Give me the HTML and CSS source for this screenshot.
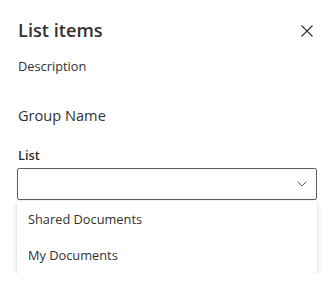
FILE: index.html
```html
<!DOCTYPE html>
<html lang="en">
<head>
    <meta charset="UTF-8">
    <title>List items</title>
    <link rel="stylesheet" href="styles.css">
</head>
<body>
    <div class="panel">
        <div class="panel-header">
            <h1 class="panel-title">List items</h1>
            <button class="close-btn" aria-label="Close">
                <svg width="12" height="12" viewBox="0 0 12 12">
                    <path d="M0.5 0.5 L11.5 11.5 M11.5 0.5 L0.5 11.5" stroke="#323130" stroke-width="1.1" fill="none"/>
                </svg>
            </button>
        </div>
        <p class="description">Description</p>
        <h2 class="group-name">Group Name</h2>
        <label class="field-label">List</label>
        <div class="dropdown">
            <div class="dropdown-box">
                <svg class="chevron" width="10" height="6" viewBox="0 0 10 6">
                    <path d="M0.5 0.5 L5 5 L9.5 0.5" stroke="#605e5c" stroke-width="1" fill="none"/>
                </svg>
            </div>
            <ul class="dropdown-menu">
                <li>Shared Documents</li>
                <li>My Documents</li>
            </ul>
        </div>
    </div>
</body>
</html>
```

FILE: styles.css
```css
body {
    margin: 0;
    background: #fff;
    font-family: "Open Sans", "Noto Sans", sans-serif;
    color: #323130;
}
.panel {
    width: 300px;
    padding: 14px 0 0 17px;
}
.panel-header {
    display: flex;
    justify-content: space-between;
    align-items: flex-start;
}
.panel-title {
    margin: 0 0 0 1px;
    font-size: 18.2px;
    font-weight: 600;
    line-height: 33px;
}
.close-btn {
    border: none;
    background: none;
    padding: 0;
    margin: 11px 4px 0 0;
    width: 12px;
    height: 12px;
}
.description {
    margin: 9px 0 0 1px;
    font-size: 12.8px;
    line-height: 20px;
}
.group-name {
    margin: 28px 0 0 1px;
    font-size: 14.6px;
    font-weight: 400;
    line-height: 22px;
}
.field-label {
    display: block;
    margin: 19px 0 0 1px;
    font-size: 12.8px;
    font-weight: 600;
    line-height: 20px;
}
.dropdown-box {
    margin-top: 3px;
    height: 30px;
    border: 1px solid #605e5c;
    border-radius: 2px;
    display: flex;
    align-items: center;
    justify-content: flex-end;
    padding-right: 9px;
}
.dropdown-menu {
    list-style: none;
    margin: 1px 0 0;
    padding: 0;
    background: #fff;
    box-shadow: 0 3px 7px rgba(0, 0, 0, 0.14), 0 0 2px rgba(0, 0, 0, 0.12);
    border-radius: 2px;
}
.dropdown-menu li {
    height: 36px;
    line-height: 36px;
    padding-left: 11px;
    font-size: 12.8px;
}
```
